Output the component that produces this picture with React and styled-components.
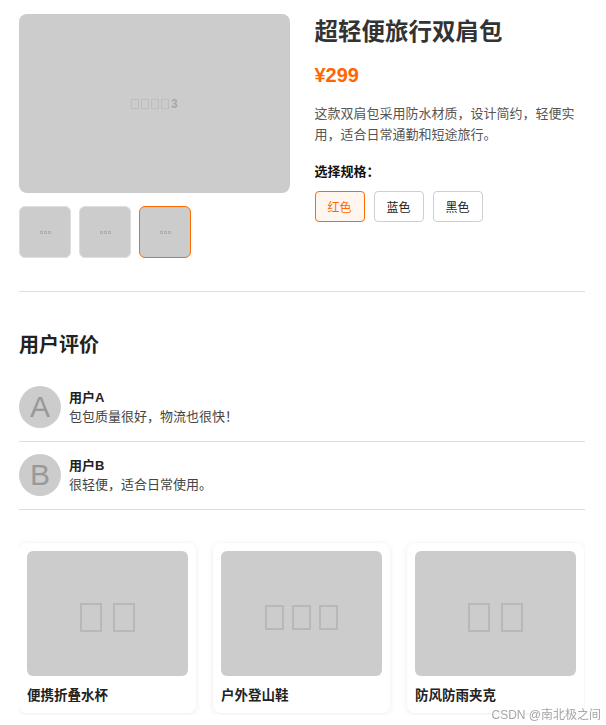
import React from "react";
import styled, { createGlobalStyle, css } from "styled-components";

const Global = createGlobalStyle`
  html, body { margin: 0; padding: 0; background: #fff; }
  body {
    font-family: "Liberation Sans", "Noto Sans CJK SC", sans-serif;
    color: #333;
  }
  * { box-sizing: border-box; }
`;

const Page = styled.div`
  padding: 14px 21px 40px 19px;
`;

const Product = styled.section`
  display: grid;
  grid-template-columns: 1fr 1fr;
  column-gap: 25px;
`;

const Gallery = styled.div`
  display: flex;
  flex-direction: column;
`;

const MainImage = styled.div`
  height: 179px;
  border-radius: 8px;
  background: #cccccc;
  display: flex;
  align-items: center;
  justify-content: center;
  gap: 2px;
  color: #a8a8a8;
  font-weight: bold;
  font-size: 12px;
`;

const Tofu = styled.span`
  display: inline-block;
  width: ${(p) => p.$w}px;
  height: ${(p) => p.$h}px;
  border: ${(p) => p.$b}px solid ${(p) => p.$c || "#b8b8b8"};
`;

const ThumbRow = styled.div`
  display: flex;
  gap: 8px;
  margin-top: 13px;
`;

const Thumb = styled.div`
  width: 52px;
  height: 52px;
  border-radius: 6px;
  background: #cccccc;
  border: 1px solid ${(p) => (p.$active ? "#ff6a00" : "#dedede")};
  display: flex;
  align-items: center;
  justify-content: center;
  gap: 1px;
`;

const Info = styled.div`
  display: flex;
  flex-direction: column;
`;

const Title = styled.h1`
  margin: 0;
  font-size: 23.5px;
  line-height: 36px;
  font-weight: bold;
  color: #333;
`;

const Price = styled.div`
  margin-top: 11px;
  font-size: 20px;
  line-height: 28px;
  font-weight: bold;
  color: #ff6600;
`;

const Desc = styled.p`
  margin: 14px 0 0;
  font-size: 13px;
  line-height: 21px;
  color: #555;
`;

const SpecLabel = styled.div`
  margin-top: 17px;
  font-size: 13px;
  line-height: 20px;
  font-weight: bold;
  color: #111;
`;

const SpecRow = styled.div`
  display: flex;
  gap: 9px;
  margin-top: 9px;
`;

const SpecButton = styled.button`
  height: 31px;
  padding: 0 12px;
  font-family: inherit;
  font-size: 12px;
  border-radius: 4px;
  cursor: pointer;
  ${(p) =>
    p.$active
      ? css`
          border: 1px solid #ff6a00;
          background: #fff6ef;
          color: #ff6a00;
        `
      : css`
          border: 1px solid #cfcfcf;
          background: #fff;
          color: #222;
        `}
`;

const Divider = styled.hr`
  border: 0;
  border-top: 1px solid #dddddd;
  margin: 33px 0 0;
`;

const SectionTitle = styled.h2`
  margin: 39px 0 0;
  font-size: 20px;
  line-height: 28px;
  font-weight: bold;
  color: #222;
`;

const ReviewList = styled.div`
  margin-top: 15px;
`;

const Review = styled.div`
  display: flex;
  align-items: center;
  gap: 8px;
  padding: 12px 0 13px;
  border-bottom: 1px solid #dddddd;
`;

const Avatar = styled.div`
  width: 42px;
  height: 42px;
  border-radius: 50%;
  background: #cccccc;
  color: #999;
  font-family: "Liberation Sans", sans-serif;
  font-size: 30px;
  line-height: 42px;
  text-align: center;
  flex: 0 0 42px;
`;

const ReviewBody = styled.div`
  display: flex;
  flex-direction: column;
`;

const ReviewName = styled.div`
  font-size: 13px;
  line-height: 19px;
  font-weight: bold;
  color: #222;
`;

const ReviewText = styled.div`
  font-size: 13px;
  line-height: 19px;
  color: #444;
`;

const Carousel = styled.div`
  display: flex;
  gap: 17px;
  margin-top: 29px;
  padding: 4px 0 2px;
  overflow-x: auto;
  &::after {
    content: "";
    flex: 0 0 1px;
  }
  &::-webkit-scrollbar {
    height: 15px;
    background: #f1f1f1;
  }
  &::-webkit-scrollbar-track {
    background: #f1f1f1;
  }
  &::-webkit-scrollbar-thumb {
    background: #c1c1c1;
    background-clip: content-box;
    border-top: 10px solid transparent;
  }
`;

const Card = styled.div`
  flex: 0 0 177px;
  background: #fff;
  border-radius: 8px;
  box-shadow: 0 1px 6px rgba(0, 0, 0, 0.08);
  padding: 8px 8px 7px;
`;

const CardImage = styled.div`
  height: 125px;
  border-radius: 6px;
  background: #cccccc;
  display: flex;
  align-items: center;
  justify-content: center;
  gap: ${(p) => p.$gap}px;
  padding-top: 8px;
`;

const CardTitle = styled.div`
  margin-top: 10px;
  font-size: 13.5px;
  line-height: 20px;
  font-weight: bold;
  color: #222;
`;

const Watermark = styled.div`
  position: fixed;
  right: 5px;
  bottom: 3px;
  font-size: 12px;
  color: #a6a6a6;
  text-shadow: 0 0 2px #fff, 0 0 2px #fff;
`;

const specs = ["红色", "蓝色", "黑色"];
const reviews = [
  { letter: "A", name: "用户A", text: "包包质量很好，物流也很快！" },
  { letter: "B", name: "用户B", text: "很轻便，适合日常使用。" },
];
const products = [
  { title: "便携折叠水杯", boxes: 2 },
  { title: "户外登山鞋", boxes: 3 },
  { title: "防风防雨夹克", boxes: 2 },
];

function ThumbMarks({ n }) {
  return (
    <>
      {Array.from({ length: n }).map((_, i) => (
        <Tofu key={i} $w={3} $h={3} $b={1} $c="#b0b0b0" />
      ))}
    </>
  );
}

export default function App() {
  return (
    <>
      <Global />
      <Page>
        <Product>
          <Gallery>
            <MainImage>
              {[0, 1, 2, 3].map((i) => (
                <Tofu key={i} $w={8} $h={10} $b={1} $c="#bdbdbd" />
              ))}
              <span>3</span>
            </MainImage>
            <ThumbRow>
              <Thumb><ThumbMarks n={3} /></Thumb>
              <Thumb><ThumbMarks n={3} /></Thumb>
              <Thumb $active><ThumbMarks n={3} /></Thumb>
            </ThumbRow>
          </Gallery>
          <Info>
            <Title>超轻便旅行双肩包</Title>
            <Price>¥299</Price>
            <Desc>这款双肩包采用防水材质，设计简约，轻便实用，适合日常通勤和短途旅行。</Desc>
            <SpecLabel>选择规格：</SpecLabel>
            <SpecRow>
              {specs.map((s, i) => (
                <SpecButton key={s} $active={i === 0}>{s}</SpecButton>
              ))}
            </SpecRow>
          </Info>
        </Product>

        <Divider />

        <SectionTitle>用户评价</SectionTitle>
        <ReviewList>
          {reviews.map((r) => (
            <Review key={r.name}>
              <Avatar>{r.letter}</Avatar>
              <ReviewBody>
                <ReviewName>{r.name}</ReviewName>
                <ReviewText>{r.text}</ReviewText>
              </ReviewBody>
            </Review>
          ))}
        </ReviewList>

        <Carousel>
          {products.map((p) => (
            <Card key={p.title}>
              <CardImage $gap={p.boxes === 3 ? 8 : 11}>
                {Array.from({ length: p.boxes }).map((_, i) =>
                  p.boxes === 3 ? (
                    <Tofu key={i} $w={19} $h={25} $b={2} />
                  ) : (
                    <Tofu key={i} $w={22} $h={29} $b={2} />
                  )
                )}
              </CardImage>
              <CardTitle>{p.title}</CardTitle>
            </Card>
          ))}
        </Carousel>
      </Page>
      <Watermark>CSDN @南北极之间</Watermark>
    </>
  );
}
